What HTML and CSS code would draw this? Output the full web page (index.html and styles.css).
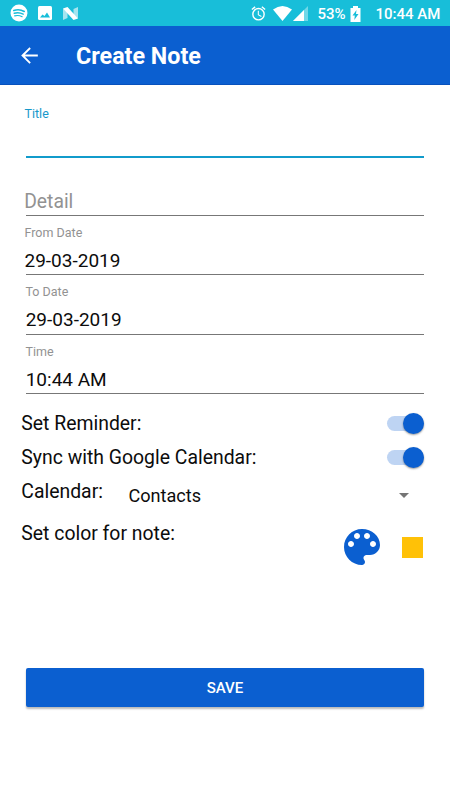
FILE: index.html
```html
<!DOCTYPE html>
<html lang="en">
<head>
<meta charset="utf-8">
<title>Create Note</title>
<link rel="stylesheet" href="styles.css">
</head>
<body>
<header class="status">
  <div class="notices">
    <svg width="18" height="18" viewBox="0 0 24 24"><circle cx="12" cy="12" r="11.3" fill="#fff"/><g fill="none" stroke="#18bed9" stroke-linecap="round"><path d="M5 8.600c4.800-1.500 10-1 14 1.300" stroke-width="2.200"/><path d="M5.600 12.300c4.300-1.200 8.400-.7 12 1.300" stroke-width="1.800"/><path d="M6.200 15.800c3.600-.9 7-.5 10 1.200" stroke-width="1.500"/></g></svg>
    <svg class="photo" width="14" height="14" viewBox="0 0 14 14"><rect width="14" height="14" rx="1.500" fill="#fff"/><path d="M2 11.500 4.500 8.500l2 1.500 2.500-3.500 3 5z" fill="#18bed9"/></svg>
    <svg class="nougat" width="15" height="13" viewBox="0 0 15 13"><path d="M0 1.500 4.500 5v6L0 13zM10.500 2 15 0v11.500L10.500 8z" fill="#a5e4ef"/><path d="M0 1.500 4.500 0 15 11.500 10.500 13z" fill="#fff"/></svg>
  </div>
  <div class="system">
    <svg width="17" height="17" viewBox="0 0 24 24" fill="#fff"><path d="M22 5.700l-4.600-3.900-1.300 1.500 4.600 3.900L22 5.700zM7.900 3.400L6.600 1.900 2 5.700l1.300 1.500 4.600-3.800zM12.500 8H11v6l4.700 2.900.8-1.200-4-2.400V8zM12 4a9 9 0 1 0 0 18 9 9 0 0 0 0-18zm0 16a7 7 0 1 1 0-14 7 7 0 0 1 0 14z"/></svg>
    <svg class="wifi" width="19" height="15" viewBox="0 0 19 15"><path d="M0 3.500Q9.500-3.500 19 3.500L9.500 15z" fill="#fff"/></svg>
    <svg class="signal" width="15" height="15" viewBox="0 0 15 15"><path d="M0 15 15 0v15z" fill="#70d8e8"/><path d="M0 15 11 4v11z" fill="#fff"/></svg>
    <span class="percent">53%</span>
    <svg class="battery" width="11" height="16" viewBox="0 0 11 16"><path d="M3 0h5v2h2.500v14H.5V2H3z" fill="#fff"/><path d="M6.500 4 2.500 9.500h2.300L4.300 14l4.200-6H6z" fill="#18bed9"/></svg>
    <span class="clock">10:44 AM</span>
  </div>
</header>
<nav class="appbar">
  <svg width="25" height="25" viewBox="0 0 24 24" fill="#fff"><path d="M20 11.100H7.600l5.650-5.650L12 4l-8 8 8 8 1.250-1.250L7.600 12.900H20z"/></svg>
  <h1>Create Note</h1>
</nav>
<main>
  <section class="fields">
    <div class="field title"><label>Title</label></div>
    <div class="field detail"><span class="hint">Detail</span></div>
    <div class="field from"><label>From Date</label><span class="value">29-03-2019</span></div>
    <div class="field to"><label>To Date</label><span class="value">29-03-2019</span></div>
    <div class="field time"><label>Time</label><span class="value">10:44 AM</span></div>
  </section>
  <section class="options">
    <div class="row"><span>Set Reminder:</span><span class="switch"><i></i></span></div>
    <div class="row"><span>Sync with Google Calendar:</span><span class="switch"><i></i></span></div>
    <div class="row calendar"><span>Calendar:</span><span class="choice">Contacts</span><i class="caret"></i></div>
    <div class="row color"><span>Set color for note:</span>
      <svg class="palette" width="36" height="36" viewBox="3 3 18 18" fill="#0b5fd0"><path d="M12 3c-4.970 0-9 4.030-9 9s4.030 9 9 9c.83 0 1.500-.67 1.500-1.500 0-.39-.15-.74-.39-1.010-.23-.26-.38-.61-.38-.99 0-.83.67-1.500 1.500-1.500H16c2.760 0 5-2.240 5-5 0-4.420-4.030-8-9-8zm-5.500 9c-.83 0-1.500-.67-1.500-1.500S5.670 9 6.500 9 8 9.670 8 10.500 7.330 12 6.500 12zm3-4C8.670 8 8 7.330 8 6.500S8.670 5 9.500 5s1.500.67 1.500 1.500S10.330 8 9.500 8zm5 0c-.83 0-1.500-.67-1.500-1.500S13.670 5 14.500 5s1.500.67 1.500 1.500S15.330 8 14.500 8zm3 4c-.83 0-1.500-.67-1.500-1.500S16.670 9 17.500 9s1.500.67 1.500 1.500-.67 1.500-1.500 1.500z"/></svg>
      <i class="swatch"></i>
    </div>
  </section>
  <button class="save">SAVE</button>
</main>
</body>
</html>
```
FILE: styles.css
```css
* { box-sizing: border-box; }
body { margin: 0; height: 800px; background: #fff; color: #0c0c0c; font-family: Roboto, "Liberation Sans", sans-serif; overflow: hidden; }
svg { display: block; flex: none; }
.status { height: 26px; background: #18bed9; color: #fff; display: flex; justify-content: space-between; padding: 0 9px 0 10px; font-size: 15px; font-weight: 500; }
.notices, .system { display: flex; align-items: center; }
.photo { margin-left: 10px; }
.nougat { margin-left: 11px; }
.system { line-height: 26px; padding-top: 1px; }
.wifi { margin-left: 6px; }
.signal { margin-left: 1px; }
.percent { margin-left: 10px; width: 28px; white-space: nowrap; }
.battery { margin-left: 4px; }
.clock { margin-left: 15px; width: 65.500px; white-space: nowrap; }
.appbar { height: 59px; background: #0b5fd0; border-bottom: 1px solid #0751bd; color: #fff; display: flex; align-items: center; padding: 1px 17px 0; }
h1 { margin: 1px 0 0 34px; font-size: 23.300px; line-height: 30px; font-weight: 700; white-space: nowrap; }
.fields { padding: 0 26px 0 25px; }
.field { display: flex; flex-direction: column; height: 59.400px; padding-top: 8px; background: linear-gradient(#777, #777) 1px 100% / 100% 1px no-repeat; white-space: nowrap; }
.field label { font-size: 12.500px; line-height: 18px; color: #929292; margin-left: -.5px; }
.value { font-size: 19px; line-height: 26px; margin-top: 6px; }
.field.title { height: 73px; padding-top: 20px; background: linear-gradient(#119bcb, #119bcb) 1px 100% / 100% 2px no-repeat; }
.field.title label { color: #1698ca; }
.field.detail { height: 58px; padding-top: 31px; }
.hint { font-size: 19.300px; line-height: 26px; color: #929292; margin-left: -.8px; }
.value { margin-left: -.5px; }
.to label, .time label { margin-left: .5px; }
.to .value, .time .value { margin-left: .7px; }
.options { padding: 12px 26px 0 21.300px; font-size: 19.400px; }
.row { display: flex; align-items: center; height: 34.500px; white-space: nowrap; }
.switch { margin-left: auto; width: 37px; height: 15px; border-radius: 8px; background: #bed4f3; display: flex; align-items: center; justify-content: flex-end; }
.switch i { width: 21px; height: 21px; flex: none; border-radius: 50%; background: #0b5fd0; box-shadow: 0 1px 2px rgba(0,0,0,.4); }
.calendar { height: 33px; }
.choice { font-size: 18.100px; margin: 8px 0 0 25.500px; }
.caret { margin: 7px 15px 0 auto; border: 5.500px solid transparent; border-top-color: #757575; border-bottom: 0; }
.color { height: 62px; align-items: flex-start; padding-top: 13px; line-height: 26px; }
.palette { margin: 8px 0 0 auto; }
.swatch { width: 21px; height: 21px; background: #ffc107; margin: 15.500px 1px 0 22.500px; }
.save { display: block; width: 398px; height: 39px; margin: 98px 0 0 26px; padding: 1px 0 0; border: 0; border-radius: 2px; background: #0b5fd0; color: #fff; font: 500 15px/38px Roboto, sans-serif; box-shadow: 0 2px 2px rgba(0,0,0,.27); }
```
